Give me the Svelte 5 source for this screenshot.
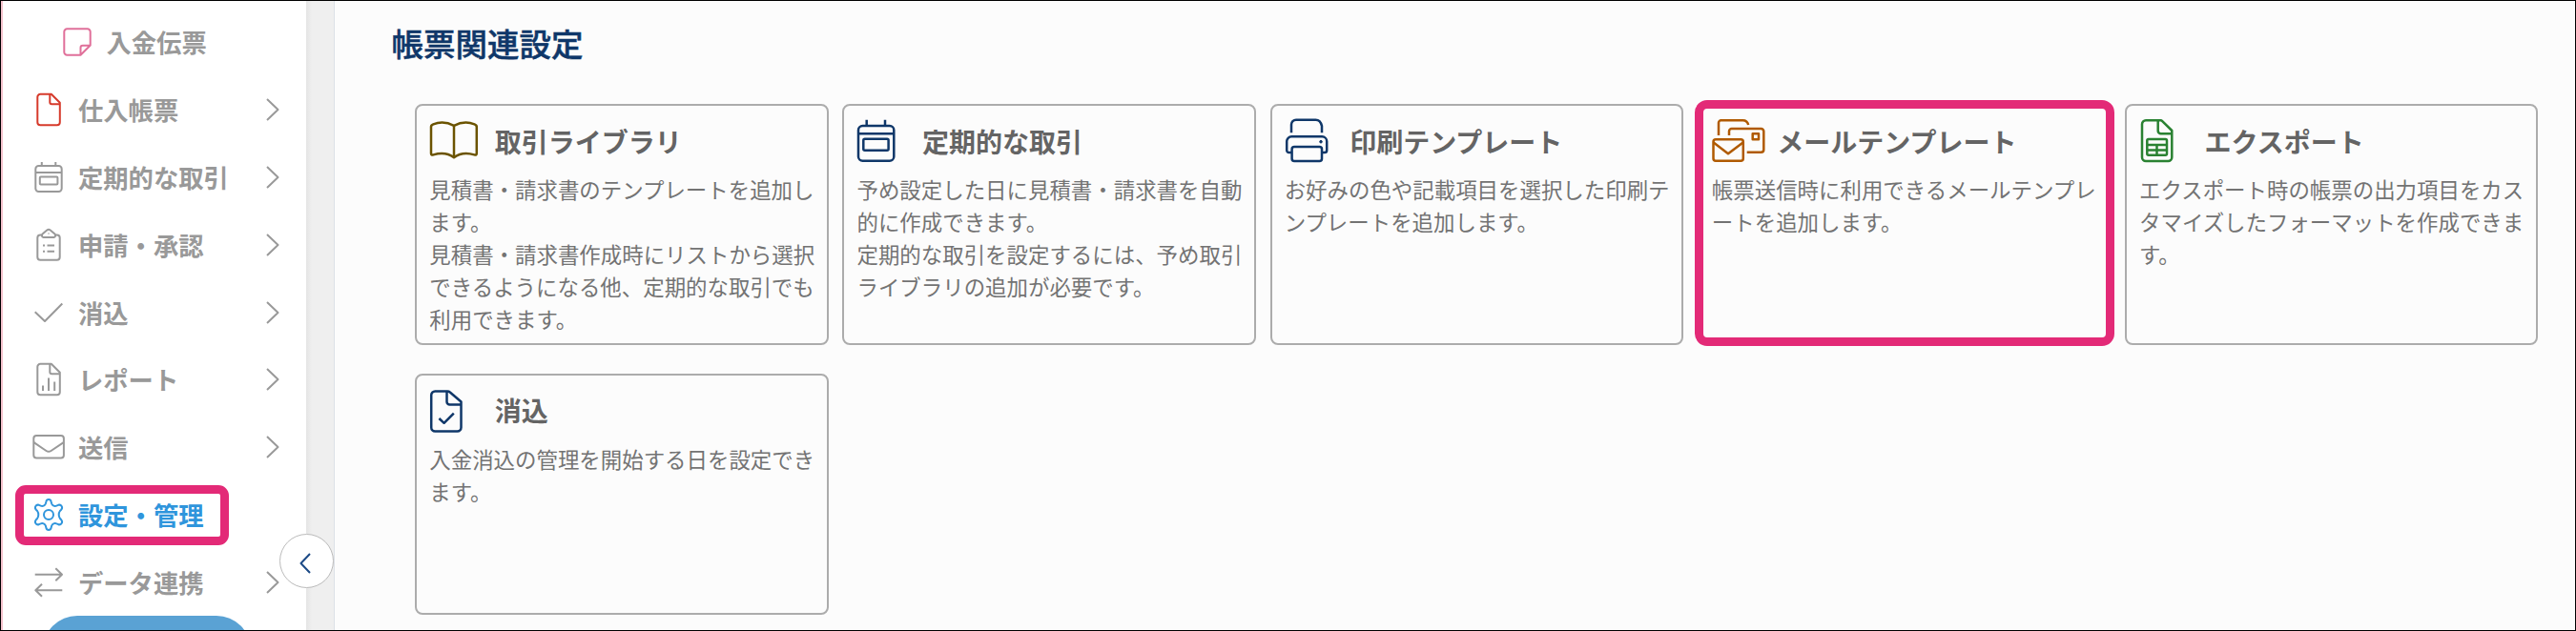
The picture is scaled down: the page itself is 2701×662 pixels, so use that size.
<script>
  const navItems = [
    { label: '入金伝票', icon: 'note', child: true },
    { label: '仕入帳票', icon: 'file' },
    { label: '定期的な取引', icon: 'calendar' },
    { label: '申請・承認', icon: 'clipboard' },
    { label: '消込', icon: 'check' },
    { label: 'レポート', icon: 'report' },
    { label: '送信', icon: 'mail' },
    { label: '設定・管理', icon: 'gear', active: true },
    { label: 'データ連携', icon: 'arrows' }
  ];

  const cards = [
    {
      title: '取引ライブラリ', icon: 'book', color: '#6b5300',
      lines: ['見積書・請求書のテンプレートを追加します。', '見積書・請求書作成時にリストから選択できるようになる他、定期的な取引でも利用できます。']
    },
    {
      title: '定期的な取引', icon: 'calendar', color: '#0f3769',
      lines: ['予め設定した日に見積書・請求書を自動的に作成できます。', '定期的な取引を設定するには、予め取引ライブラリの追加が必要です。']
    },
    { title: '印刷テンプレート', icon: 'printer', color: '#0f3769', lines: ['お好みの色や記載項目を選択した印刷テンプレートを追加します。'] },
    { title: 'メールテンプレート', icon: 'mails', color: '#b05a00', lines: ['帳票送信時に利用できるメールテンプレートを追加します。'], marked: true },
    { title: 'エクスポート', icon: 'sheet', color: '#2a8232', lines: ['エクスポート時の帳票の出力項目をカスタマイズしたフォーマットを作成できます。'] },
    { title: '消込', icon: 'filecheck', color: '#0f3769', lines: ['入金消込の管理を開始する日を設定できます。'] }
  ];
</script>

{#snippet navIcon(name)}
  <svg class="nav-icon {name}" viewBox="0 0 36 36">
    {#if name === 'note'}
      <path d="M21.5 31.7H7.3a3 3 0 0 1-3-3V7.3a3 3 0 0 1 3-3h21.4a3 3 0 0 1 3 3v14.2L21.5 31.7V24a2.3 2.3 0 0 1 2.3-2.3h7.9" />
    {:else if name === 'file'}
      <path d="M9.3 1.8h11.5l9 9v20.4a3 3 0 0 1-3 3H9.3a3 3 0 0 1-3-3V4.8a3 3 0 0 1 3-3zM19.3 1.8v8.4a2 2 0 0 0 2 2h8.5" />
    {:else if name === 'calendar'}
      <rect x="4.3" y="6" width="27.4" height="27" rx="3.2" />
      <path d="M4.3 13h27.4M10.8 2v4M25.3 2v4" />
      <rect x="8.8" y="17.6" width="18.6" height="8" rx="1" />
    {:else if name === 'clipboard'}
      <path d="M12 7.5H9.3a3 3 0 0 0-3 3v20.3a3 3 0 0 0 3 3h17.4a3 3 0 0 0 3-3V10.5a3 3 0 0 0-3-3H24M12.5 10h11a2 2 0 0 0 1-3.5L19.8 2.500a3 3 0 0 0-3.600 0L11.500 6.500a2 2 0 0 0 1 3.500zM16.500 18.500h7.500M16.500 24.700h7.500M12 18.500h2M12 24.700h2M17.600 6h.8" />
    {:else if name === 'check'}
      <path d="M3.700 17.200l10.300 9.800L32.300 8.500" />
    {:else if name === 'report'}
      <path d="M9.300 1.800h11.500l9 9v20.400a3 3 0 0 1-3 3H9.300a3 3 0 0 1-3-3V4.800a3 3 0 0 1 3-3zM19.300 1.800v8.400a2 2 0 0 0 2 2h8.500M12 24.500v5.500M18 16.500v13.500M24.200 20.500v9.500" />
    {:else if name === 'mail'}
      <rect x="2.300" y="6" width="31.600" height="23.500" rx="3" />
      <path d="M2.500 13.200L15.500 22q2.500 1.700 5 0l13.200-8.800" />
    {:else if name === 'gear'}
      <circle cx="18" cy="18" r="5" />
      <path d="M15.400 4.200Q15.800 2 18 2t2.600 2.200l.5 2.100q.5 1.600 2.100 2.300t3.100 0l1.900-.8q2.200-.7 3.400 1.200t-.4 3.700l-1.300 1.300Q28.700 15.700 28.700 18t1.200 4l1.300 1.300q1.600 1.800.4 3.700t-3.400 1.200l-1.900-.8q-1.500-.7-3.100 0t-2.100 2.300l-.5 2.100Q20.200 34 18 34t-2.600-2.200l-.5-2.100q-.5-1.600-2.100-2.300t-3.100 0l-1.900.8q-2.200.7-3.400-1.200t.4-3.700L6.100 22Q7.300 20.300 7.300 18t-1.200-4l-1.300-1.300Q3.200 10.900 4.400 9t3.400-1.200l1.900.8q1.500.7 3.100 0t2.100-2.300z" />
    {:else if name === 'arrows'}
      <path d="M3.700 9.800h28M25.300 3.300l6.700 6.500-6.700 6.500M32.300 26.300h-28M11 19.800l-6.700 6.500L11 32.800" />
    {/if}
  </svg>
{/snippet}

{#snippet cardIcon(name, color)}
  <svg class="card-icon" viewBox="0 0 60 48" style:color={color}>
    {#if name === 'book'}
      <path d="M26 8.800Q15 3.200 4.300 7.400Q2 8.300 2 10v28q0 2 2.400 1.400Q17 35.500 26 42.200Q35 35.500 47.400 39.400Q49.800 40 49.800 38V10q0-1.700-2.300-2.600Q37 3.200 26 8.800zV42" />
    {:else if name === 'calendar'}
      <rect x="2" y="9" width="37.300" height="36.700" rx="4.500" />
      <path d="M2 17.300h37.300M10.700 2.700v6M30 2.700v6" />
      <rect x="7.300" y="22.700" width="26.300" height="12" rx="1.500" />
    {:else if name === 'printer'}
      <path d="M7 16.300V7.700a5 5 0 0 1 5-5h20.500q2.500 0 4 1.500t2.500 5v7.100" />
      <path d="M7.600 37H4.500a2.300 2.300 0 0 1-2.300-2.300V25.300a5 5 0 0 1 5-5h32a5 5 0 0 1 5 5v9.400a2.300 2.300 0 0 1-2.300 2.300H39" />
      <rect x="7.600" y="31" width="31.400" height="15" rx="2.500" />
      <circle cx="38" cy="25.700" r="1.300" fill="currentColor" stroke-width="1" />
    {:else if name === 'mails'}
      <path d="M7 19V5.800a2.500 2.500 0 0 1 2.500-2.500h23q4.500 0 5.700 4.700M18 19v-4.300a2.700 2.700 0 0 1 2.700-2.700h30.900a2.700 2.700 0 0 1 2.700 2.700v19.300a2.700 2.700 0 0 1-2.700 2.700H36.700" />
      <rect x="42.700" y="17.300" width="6.300" height="6" />
      <rect x="1.500" y="23.300" width="31.300" height="22.400" rx="2.500" />
      <path d="M1.700 26.500L17 38.300l15.600-11.800" />
    {:else if name === 'sheet'}
      <path d="M7 3.300h15.500q1 0 2 1L34.300 14v28a4 4 0 0 1-4 4H7a4 4 0 0 1-4-4V7.300a4 4 0 0 1 4-4zM19.700 3.300v11a3 3 0 0 0 3 3h11.600" />
      <rect x="8.300" y="23" width="20.700" height="16.700" rx="1.500" />
      <path d="M8.300 29h20.700M8.300 34.600h20.700M18.500 29v10.700" />
    {:else}
      <path d="M6.200 4.500h13q1.500 0 2.600 1L33.500 15.500v27a4 4 0 0 1-4 4H6.200a4 4 0 0 1-4-4V8.500a4 4 0 0 1 4-4zM18.500 4.500v11a3 3 0 0 0 3 3h12M10.400 33l5.200 4.800 10.200-10.200" />
    {/if}
  </svg>
{/snippet}

<div class="frame">
  <aside class="sidebar">
    <nav>
      {#each navItems as item}
        <div class="nav-row" class:child={item.child} class:active={item.active}>
          {@render navIcon(item.icon)}
          <span class="nav-label">{item.label}</span>
          {#if !item.child && !item.active}
            <svg class="chevron" viewBox="0 0 14 24"><path d="M1 1l11.500 11L1 23" /></svg>
          {/if}
        </div>
      {/each}
    </nav>
    <div class="cta"></div>
    <button class="collapse" aria-label="閉じる">
      <svg viewBox="0 0 12 22"><path d="M11 1L1.500 11 11 21" /></svg>
    </button>
  </aside>

  <main>
    <h2>帳票関連設定</h2>
    <div class="grid">
      {#each cards as card}
        <section class="card" class:marked={card.marked}>
          <header>
            {@render cardIcon(card.icon, card.color)}
            <h3>{card.title}</h3>
          </header>
          {#each card.lines as line}
            <p>{line}</p>
          {/each}
        </section>
      {/each}
    </div>
  </main>
</div>

<style>
  :global(body) { background: #fcfcfc; overflow: hidden; }

  .frame {
    box-sizing: border-box;
    width: 2701px;
    height: 662px;
    display: flex;
    overflow: hidden;
    border: 1px solid #000;
    background: #fcfcfc;
    font-family: "Noto Sans CJK JP", sans-serif;
  }

  svg { fill: none; stroke: currentColor; stroke-linejoin: round; overflow: visible; flex: none; display: block; }

  .sidebar {
    position: relative;
    box-sizing: border-box;
    width: 350px;
    flex: none;
    padding-top: 8px;
    border-left: 2px solid #f5c3cd;
    border-right: 1px solid #dde1e7;
    background: linear-gradient(90deg, #fff 318px, #e4e4e4 318px, #efefef 324px);
  }

  .nav-row {
    position: relative;
    box-sizing: border-box;
    width: 318px;
    height: 70.8px;
    display: flex;
    align-items: center;
    padding: 0 28px 0 29.500px;
    color: #999;
  }
  .nav-row.child { padding-left: 60px; }
  .nav-row.active { color: #2f95dc; }
  .nav-row.active::after {
    content: '';
    position: absolute;
    left: 13px;
    top: 4px;
    box-sizing: border-box;
    width: 224px;
    height: 63px;
    border: 9px solid #e32a77;
    border-radius: 11px;
  }
  .nav-icon { width: 36px; height: 36px; margin-right: 13.500px; stroke-width: 2; }
  .nav-icon.note { color: #e0709a; margin-right: 12.500px; }
  .nav-icon.file { color: #d63b2c; }
  .nav-label { flex: 1; font-size: 26.300px; font-weight: 700; line-height: 40px; white-space: nowrap; }
  .chevron { width: 14px; height: 24px; stroke-width: 2; }

  .cta { width: 218px; height: 72px; margin-left: 42px; border-radius: 36px; background: #5aa2d4; }

  .collapse {
    position: absolute;
    left: 289.500px;
    top: 559px;
    box-sizing: border-box;
    width: 57px;
    height: 57px;
    padding: 5px 2px 0 0;
    display: grid;
    place-items: center;
    border: 1px solid #bbb;
    border-radius: 50%;
    background: #fff;
    color: #1c4a86;
  }
  .collapse svg { width: 12px; height: 22px; stroke-width: 2; }

  main { flex: 1; min-width: 0; padding: 19px 0 0 59.500px; }
  h2 { margin: 0; font-size: 33.500px; line-height: 50px; font-weight: 500; -webkit-text-stroke: .5px; color: #0f3769; }

  .grid {
    display: grid;
    grid-template-columns: repeat(5, 433.300px);
    grid-auto-rows: 253.300px;
    gap: 29.700px 14.900px;
    margin: 39px 0 0 24.800px;
  }
  .card {
    position: relative;
    box-sizing: border-box;
    padding: 12px 10px 0 13px;
    border: 2px solid #acacac;
    border-radius: 8px;
  }
  .card.marked { border-color: transparent; }
  .card.marked::after {
    content: '';
    position: absolute;
    inset: -6px -6px -3px -5px;
    border: 9px solid #e32a77;
    border-radius: 13px;
  }
  header { display: flex; align-items: center; gap: 8.500px; height: 48px; margin-bottom: 11px; }
  .card-icon { width: 60px; height: 48px; stroke-width: 2.500; }
  h3 { margin: 0; font-size: 28px; line-height: 42px; padding-top: 1px; font-weight: 700; color: #646464; white-space: nowrap; }
  p { margin: 0; width: 405px; font-size: 22.450px; line-height: 33.900px; color: #737373; word-break: break-all; line-break: anywhere; }
</style>
